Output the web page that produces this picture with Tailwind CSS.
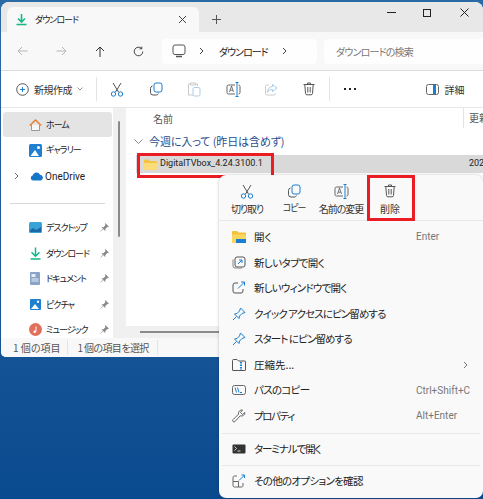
<!DOCTYPE html>
<html lang="ja">
<head>
<meta charset="utf-8">
<title>ダウンロード</title>
<script src="https://cdn.jsdelivr.net/npm/@tailwindcss/browser@4"></script>
</head>
<body class="w-[483px] h-[499px] overflow-hidden relative bg-gradient-to-b from-[#2a6aa5] to-[#0a4a8e] font-['Noto_Sans_CJK_JP','Liberation_Sans',sans-serif] [font-feature-settings:'palt'] text-[10px] text-[#222] whitespace-nowrap">

<!-- explorer window -->
<div class="absolute left-[1px] top-[2px] w-[482px] h-[355px] bg-white rounded-t-[8px] rounded-bl-[5px] overflow-hidden flex flex-col">
  <!-- tabs -->
  <div class="h-[30px] bg-[#e8e8e8] flex items-end pl-[6px] shrink-0">
    <div class="w-[192px] h-[25px] bg-[#f8f8f8] rounded-t-[6px] flex items-center pl-[9px] pr-[12px]">
      <svg width="11" height="13" viewBox="0 0 11 13"><path d="M5.5 1v7.5M2 5.5l3.5 3.5L9 5.5" fill="none" stroke="#12b886" stroke-width="1.6"/><path d="M.5 11.5h10" stroke="#12b886" stroke-width="1.6"/></svg>
      <span class="ml-[8px] text-[9px] tracking-[-1px]">ダウンロード</span>
      <svg class="ml-auto" width="9" height="9" viewBox="0 0 9 9"><path d="M1 1l7 7M8 1l-7 7" stroke="#444" stroke-width="1"/></svg>
    </div>
    <svg class="ml-[13px] mb-[8px]" width="9" height="9" viewBox="0 0 9 9"><path d="M4.5 0v9M0 4.5h9" stroke="#555" stroke-width="1"/></svg>
    <div class="ml-auto self-start flex items-center mt-[6px] mr-[14px]">
      <div class="w-[9px] h-px bg-[#222]"></div>
      <div class="ml-[27px] w-[8px] h-[8px] border border-[#222]"></div>
      <svg class="ml-[29px]" width="9" height="9" viewBox="0 0 9 9"><path d="M.5.5l8 8M8.500.5l-8 8" stroke="#222" stroke-width="1"/></svg>
    </div>
  </div>
  <!-- address row -->
  <div class="h-[39px] bg-[#f8f8f8] border-b border-[#dcdcdc] flex items-center shrink-0 relative">
    <div class="flex items-center w-[161px] pl-[16px] gap-[28px]">
      <svg width="11" height="10" viewBox="0 0 11 10"><path d="M10.5 5H1M5 1L1 5l4 4" fill="none" stroke="#b5b5b5"/></svg>
      <svg width="11" height="10" viewBox="0 0 11 10"><path d="M.5 5H10M6 1l4 4-4 4" fill="none" stroke="#b5b5b5"/></svg>
      <svg width="10" height="11" viewBox="0 0 10 11"><path d="M5 11V1M1 5l4-4 4 4" fill="none" stroke="#333"/></svg>
      <svg width="11" height="11" viewBox="0 0 11 11"><path d="M9.800 5.500a4.300 4.300 0 1 1-1.300-3.100M8.800.6v2.200H6.600" fill="none" stroke="#444"/></svg>
    </div>
    <div class="w-[155px] h-[25px] bg-white/80 rounded-[4px] flex items-center pl-[10px]">
      <svg width="14" height="14" viewBox="0 0 14 14"><rect x="1" y="1" width="12" height="9.500" rx="2" fill="none" stroke="#555"/><path d="M4 12.500h6" stroke="#555" stroke-width="1.400"/></svg>
      <svg class="ml-[13px]" width="5" height="8" viewBox="0 0 5 8"><path d="M1 1l3 3-3 3" fill="none" stroke="#444"/></svg>
      <span class="ml-[15px] w-[48px] tracking-[-1px]">ダウンロード</span>
      <svg class="ml-[15px]" width="5" height="8" viewBox="0 0 5 8"><path d="M1 1l3 3-3 3" fill="none" stroke="#444"/></svg>
    </div>
    <div class="ml-[7px] flex-1 h-[25px] bg-white/80 rounded-l-[4px] flex items-center pl-[12px] text-[#777] tracking-[-.8px]">ダウンロードの検索</div>
  </div>
  <!-- command bar -->
  <div class="h-[37px] bg-white border-b border-[#e6e6e6] flex items-center shrink-0 pl-[15px]">
    <svg width="13" height="13" viewBox="0 0 13 13"><circle cx="6.500" cy="6.500" r="5.800" fill="none" stroke="#555"/><path d="M6.500 4v5M4 6.500h5" stroke="#1a7fd0"/></svg>
    <span class="ml-[5px] w-[38px] text-[#333] tracking-[-.5px]">新規作成</span>
    <svg class="ml-[5px]" width="6" height="4" viewBox="0 0 6 4"><path d="M.5.5L3 3 5.500.5" fill="none" stroke="#999"/></svg>
    <div class="w-px h-[24px] bg-[#e4e4e4] ml-[13px]"></div>
    <div class="ml-[13px] flex items-center gap-[24.500px]">
      <svg width="14" height="15" viewBox="0 0 14 15"><path d="M3 1l5.500 9M11 1L5.500 10" fill="none" stroke="#555"/><circle cx="3.500" cy="12" r="2.200" fill="none" stroke="#1a7fd0"/><circle cx="10.500" cy="12" r="2.200" fill="none" stroke="#1a7fd0"/></svg>
      <svg width="14" height="14" viewBox="0 0 14 14"><rect x="5" y="1" width="8" height="9" rx="2" fill="none" stroke="#1a7fd0"/><path d="M3.500 4A2.500 2.500 0 0 0 1.500 6.500v4a2.500 2.500 0 0 0 2.500 2.500h3.500a2.500 2.500 0 0 0 2-1.500" fill="none" stroke="#555"/></svg>
      <svg width="14" height="15" viewBox="0 0 14 15"><path d="M3 2H1.500v11H6M9 2h1.500v2M3.500 1h5v2h-5z" fill="none" stroke="#c8c8c8"/><rect x="6" y="5.500" width="7" height="8.500" rx="1.500" fill="none" stroke="#a8cbe8"/></svg>
      <svg width="15" height="15" viewBox="0 0 15 15"><path d="M9 3H2.500A1.500 1.500 0 0 0 1 4.500v6A1.500 1.500 0 0 0 2.500 12H9M12.500 3a1.500 1.500 0 0 1 1.500 1.500v6a1.500 1.500 0 0 1-1.500 1.500" fill="none" stroke="#666"/><path d="M11 .5v14M9.500.5h3M9.500 14.500h3" fill="none" stroke="#1a7fd0"/><path d="M3.500 10l2-6 2 6M4.200 8.200h2.600" fill="none" stroke="#555" stroke-width=".8"/></svg>
      <svg width="13" height="13" viewBox="0 0 13 13"><path d="M7.500 1.500L12 5 7.500 8.500V6.500C5 6.500 3.500 7.500 2.500 9.500 2.500 6 4.500 3.700 7.500 3.500z" fill="none" stroke="#a8cbe8"/><path d="M3.500 2H2A1.500 1.500 0 0 0 .5 3.500v7A1.500 1.500 0 0 0 2 12h7a1.500 1.500 0 0 0 1.500-1.500" fill="none" stroke="#ccc"/></svg>
      <svg width="12" height="14" viewBox="0 0 12 14"><path d="M.5 2.500h11M4.500 2.500V1h3v1.500M1.800 2.500l.7 9a1.500 1.500 0 0 0 1.500 1.300h4a1.500 1.500 0 0 0 1.500-1.300l.7-9M4.800 5v5.500M7.200 5v5.500" fill="none" stroke="#555"/></svg>
    </div>
    <div class="w-px h-[24px] bg-[#e4e4e4] ml-[14px]"></div>
    <div class="ml-[14px] flex gap-[3px]"><i class="w-[2px] h-[2px] bg-[#222]"></i><i class="w-[2px] h-[2px] bg-[#222]"></i><i class="w-[2px] h-[2px] bg-[#222]"></i></div>
    <svg class="ml-[70px]" width="13" height="11" viewBox="0 0 13 11"><rect x=".5" y=".5" width="12" height="10" rx="2" fill="none" stroke="#666"/><path d="M8.500 1v9" stroke="#1a7fd0" stroke-width="3"/></svg>
    <span class="ml-[6px] text-[#333]">詳細</span>
  </div>
  <!-- body -->
  <div class="flex-1 flex min-h-0">
    <!-- nav pane -->
    <div class="w-[112px] shrink-0 pt-[4px] pl-[2px] pr-[1px] overflow-hidden flex flex-col text-[9px] tracking-[-1px]">
      <div class="h-[25px] rounded-[3px] bg-[#e4e4e4] flex items-center pl-[26px] gap-[4px] shrink-0">
        <svg width="13" height="12" viewBox="0 0 13 12"><path d="M2.500 6v5.500h8V6" fill="#f6f6f6" stroke="#999"/><path d="M.8 6.500L6.500 1l5.700 5.500" fill="none" stroke="#e8803a" stroke-width="1.500"/></svg>
        <span>ホーム</span>
      </div>
      <div class="h-[26px] flex items-center pl-[26px] gap-[4px] shrink-0">
        <svg width="13" height="13" viewBox="0 0 13 13"><rect width="13" height="13" rx="1.500" fill="#1f7fd1"/><path d="M1.500 12L6 6l4 6z" fill="#fff"/><circle cx="9.500" cy="3.500" r="1.500" fill="#fff"/></svg>
        <span>ギャラリー</span>
      </div>
      <div class="h-[26px] flex items-center pl-[11px] shrink-0">
        <svg width="5" height="8" viewBox="0 0 5 8"><path d="M1 1l3 3-3 3" fill="none" stroke="#666"/></svg>
        <svg class="ml-[11px]" width="14" height="10" viewBox="0 0 14 10"><path d="M3 9.500A2.500 2.500 0 0 1 2.600 4.600 4 4 0 0 1 10 3.700a3 3 0 0 1 1 5.800z" fill="#1476c9"/></svg>
        <span class="ml-[1px] font-['Roboto'] text-[10px] tracking-normal">OneDrive</span>
      </div>
      <div class="h-px bg-[#d8d8d8] mx-[7px] mt-[14px] mb-[11px] shrink-0"></div>
      <div class="h-[25.500px] flex items-center pl-[26px] gap-[4px] shrink-0">
        <svg width="13" height="11" viewBox="0 0 13 11"><rect width="13" height="11" rx="1.500" fill="#38a3d6"/><path d="M1 8l3-2 3 2 5-3v5H1z" fill="#1a6aa8"/></svg>
        <span>デスクトップ</span>
        <svg class="ml-auto mr-[3px]" width="9" height="9" viewBox="0 0 9 9"><path d="M5.500.5l3 3-1.500.5-2 2 0 1.500L2 4.500h1.500l2-2zM3.200 5.800L.5 8.500" fill="#888" stroke="#888" stroke-width=".6"/></svg>
      </div>
      <div class="h-[25.500px] flex items-center pl-[27px] gap-[5px] shrink-0">
        <svg width="11" height="13" viewBox="0 0 11 13"><path d="M5.500 .5v8.500M1.500 5.200L5.500 9.200l4-4M.5 12h10" fill="none" stroke="#12b886" stroke-width="1.500"/></svg>
        <span>ダウンロード</span>
        <svg class="ml-auto mr-[3px]" width="9" height="9" viewBox="0 0 9 9"><path d="M5.500.5l3 3-1.500.5-2 2 0 1.500L2 4.500h1.500l2-2zM3.200 5.800L.5 8.500" fill="#888" stroke="#888" stroke-width=".6"/></svg>
      </div>
      <div class="h-[25.500px] flex items-center pl-[27px] gap-[6px] shrink-0">
        <svg width="10" height="13" viewBox="0 0 10 13"><rect width="10" height="13" rx="1" fill="#8aa4c8"/><rect x="1.500" y="2" width="4" height="3" fill="#e4ecf5"/><path d="M1.500 7h7M1.500 9h7" stroke="#e4ecf5"/></svg>
        <span>ドキュメント</span>
        <svg class="ml-auto mr-[3px]" width="9" height="9" viewBox="0 0 9 9"><path d="M5.500.5l3 3-1.500.5-2 2 0 1.500L2 4.500h1.500l2-2zM3.200 5.800L.5 8.500" fill="#888" stroke="#888" stroke-width=".6"/></svg>
      </div>
      <div class="h-[25.500px] flex items-center pl-[27px] gap-[5px] shrink-0">
        <svg width="11" height="11" viewBox="0 0 11 11"><rect width="11" height="11" rx="1" fill="#1f7fd1"/><path d="M1 10l4-5 4 5z" fill="#fff"/><circle cx="8" cy="2.800" r="1.200" fill="#fff"/></svg>
        <span>ピクチャ</span>
        <svg class="ml-auto mr-[3px]" width="9" height="9" viewBox="0 0 9 9"><path d="M5.500.5l3 3-1.500.5-2 2 0 1.500L2 4.500h1.500l2-2zM3.200 5.800L.5 8.500" fill="#888" stroke="#888" stroke-width=".6"/></svg>
      </div>
      <div class="h-[25.500px] flex items-center pl-[26px] gap-[4px] shrink-0">
        <svg width="13" height="13" viewBox="0 0 13 13"><circle cx="6.500" cy="6.500" r="6.500" fill="#e0705a"/><path d="M7 3.500v5" stroke="#fff"/><circle cx="5.700" cy="8.700" r="1.300" fill="#fff"/></svg>
        <span>ミュージック</span>
        <svg class="ml-auto mr-[3px]" width="9" height="9" viewBox="0 0 9 9"><path d="M5.500.5l3 3-1.500.5-2 2 0 1.500L2 4.500h1.500l2-2zM3.200 5.800L.5 8.500" fill="#888" stroke="#888" stroke-width=".6"/></svg>
      </div>
    </div>
    <!-- nav scrollbar -->
    <div class="w-[12px] bg-[#f0f0f0] shrink-0 flex justify-center pt-[13px]"><div class="w-[2px] h-[116px] bg-[#8a8a8a] rounded-full"></div></div>
    <!-- file list -->
    <div class="flex-1 min-w-0 relative pl-[1px] border-l border-[#f2f2f2]">
      <div class="h-[20px] flex items-center pl-[26px] text-[#555] relative">名前
        <span class="absolute left-[336px] top-0 h-[20px] border-l border-[#e4e4e4] pl-[5px] leading-[20px]">更新</span>
      </div>
      <div class="h-[27px] flex items-center pl-[7px] text-[#2a4e8f] text-[11px]">
        <svg width="9" height="6" viewBox="0 0 9 6"><path d="M.5.5l4 4 4-4" fill="none" stroke="#888"/></svg>
        <span class="ml-[6px] tracking-[-.1px]">今週に入って (昨日は含めず)</span>
      </div>
      <div class="h-[18px] ml-[9px] bg-[#d9d9d9] flex items-center pl-[8px] font-['Roboto'] text-[9px]">
        <svg width="13" height="11" viewBox="0 0 13 11"><path d="M0 1.500A1 1 0 0 1 1 .5h3.500L6 2h6a1 1 0 0 1 1 1v7a1 1 0 0 1-1 1H1a1 1 0 0 1-1-1z" fill="#f4c542"/><path d="M0 4h13v6a1 1 0 0 1-1 1H1a1 1 0 0 1-1-1z" fill="#fbdc7a"/></svg>
        <span class="ml-[3px]">DigitalTVbox_4.24.3100.1</span>
        <span class="absolute left-[343px]">202</span>
      </div>
      <!-- horizontal scrollbar -->
      <div class="absolute bottom-0 left-0 right-0 h-[12px] bg-[#f0f0f0] pl-[14px] pt-[5px]"><div class="h-[2px] w-[100px] bg-[#8a8a8a]"></div></div>
    </div>
  </div>
  <!-- status bar -->
  <div class="h-[19px] bg-[#f8f8f8] shrink-0 flex items-center pl-[12px] text-[#555]">
    <span>1 個の項目</span>
    <span class="ml-[7px] border-l border-[#e4e4e4] pl-[9px] pr-[8px] border-r tracking-[-.6px]">1 個の項目を選択</span>
  </div>
</div>

<!-- red highlight on the file row -->
<div class="absolute left-[137px] top-[153px] w-[137px] h-[25px] border-[3px] border-[#ec1c24]"></div>

<!-- context menu -->
<div class="absolute left-[219px] top-[175px] w-[264px] h-[323px] bg-[#f9f9f9] rounded-[7px] shadow-[0_0_3px_rgba(0,0,0,.25)] text-[#222]">
  <div class="h-[46px] border-b border-[#e8e8e8] flex items-start pt-[9px]">
    <div class="w-[56px] flex flex-col items-center gap-[2px] text-[#333]">
      <svg width="14" height="15" viewBox="0 0 14 15"><path d="M3 1l5.500 9M11 1L5.500 10" fill="none" stroke="#555"/><circle cx="3.500" cy="12" r="2.200" fill="none" stroke="#1a7fd0"/><circle cx="10.500" cy="12" r="2.200" fill="none" stroke="#1a7fd0"/></svg>
      <span class="tracking-[-1.200px]">切り取り</span>
    </div>
    <div class="w-[38px] flex flex-col items-center gap-[2px] text-[#333]">
      <svg width="14" height="14" viewBox="0 0 14 14"><rect x="5" y="1" width="8" height="9" rx="2" fill="none" stroke="#1a7fd0"/><path d="M3.500 4A2.500 2.500 0 0 0 1.500 6.500v4a2.500 2.500 0 0 0 2.500 2.500h3.500a2.500 2.500 0 0 0 2-1.500" fill="none" stroke="#555"/></svg>
      <span class="mt-[1px] text-[9px] tracking-[-1px]">コピー</span>
    </div>
    <div class="w-[56px] flex flex-col items-center gap-[2px] text-[#333]">
      <svg width="15" height="15" viewBox="0 0 15 15"><path d="M9 3H2.500A1.500 1.500 0 0 0 1 4.500v6A1.500 1.500 0 0 0 2.500 12H9M12.500 3a1.500 1.500 0 0 1 1.500 1.500v6a1.500 1.500 0 0 1-1.500 1.500" fill="none" stroke="#666"/><path d="M11 .5v14M9.500.5h3M9.500 14.500h3" fill="none" stroke="#1a7fd0"/><path d="M3.500 10l2-6 2 6M4.200 8.200h2.600" fill="none" stroke="#555" stroke-width=".8"/></svg>
      <span class="tracking-[-1px]">名前の変更</span>
    </div>
    <div class="w-[42px] flex flex-col items-center gap-[2px] text-[#333]">
      <svg width="12" height="14" viewBox="0 0 12 14"><path d="M.5 2.500h11M4.500 2.500V1h3v1.500M1.800 2.500l.7 9a1.500 1.500 0 0 0 1.500 1.300h4a1.500 1.500 0 0 0 1.500-1.300l.7-9M4.800 5v5.500M7.200 5v5.500" fill="none" stroke="#555"/></svg>
      <span class="mt-[1px]">削除</span>
    </div>
  </div>
  <div class="pt-[3px] text-[10.500px]">
    <div class="h-[25.600px] flex items-center pl-[13px] pr-[14px]">
      <svg class="w-[14px]" width="14" height="12" viewBox="0 0 14 12"><path d="M0 1a1 1 0 0 1 1-1h4l1.500 1.500H13a1 1 0 0 1 1 1V11a1 1 0 0 1-1 1H1a1 1 0 0 1-1-1z" fill="#f5c23e"/><rect x="0" y="3.500" width="14" height="8.500" rx="1" fill="#fbd65e"/><rect x="4" y="8" width="10" height="4" fill="#1a7fd0"/></svg>
      <span class="ml-[8px]">開く</span><span class="ml-auto w-[53px] text-[#777] font-['Roboto'] text-[10px]">Enter</span>
    </div>
    <div class="h-[25.600px] flex items-center pl-[13px]">
      <svg class="w-[14px]" width="14" height="13" viewBox="0 0 14 13"><rect x="3" y="1" width="10" height="10" rx="2" fill="none" stroke="#555"/><path d="M1 3.500V10a2 2 0 0 0 2 2h7" fill="none" stroke="#888"/><path d="M6 8l4-4M7 4h3v3" fill="none" stroke="#1a7fd0"/></svg>
      <span class="ml-[8px] tracking-[-.6px]">新しいタブで開く</span>
    </div>
    <div class="h-[25.600px] flex items-center pl-[13px]">
      <svg class="w-[14px]" width="14" height="13" viewBox="0 0 14 13"><path d="M6 2H3a2 2 0 0 0-2 2v6a2 2 0 0 0 2 2h6a2 2 0 0 0 2-2V8" fill="none" stroke="#555"/><path d="M6 7.500L12.500 1M9 1h3.500v3.500" fill="none" stroke="#1a7fd0"/></svg>
      <span class="ml-[8px] tracking-[-.8px]">新しいウィンドウで開く</span>
    </div>
    <div class="h-[25.600px] flex items-center pl-[13px]">
      <svg class="w-[14px]" width="14" height="14" viewBox="0 0 14 14"><path d="M8.500 1L13 5.500l-3 1-2.500 2.500-.5 2.500L2.500 7 5 6.500 7.500 4zM4.500 9.500L1 13" fill="none" stroke="#1a7fd0"/></svg>
      <span class="ml-[8px] tracking-[-.9px]">クイック アクセスにピン留めする</span>
    </div>
    <div class="h-[25.600px] flex items-center pl-[13px]">
      <svg class="w-[14px]" width="14" height="14" viewBox="0 0 14 14"><path d="M8.500 1L13 5.500l-3 1-2.500 2.500-.5 2.500L2.500 7 5 6.500 7.500 4zM4.500 9.500L1 13" fill="none" stroke="#1a7fd0"/></svg>
      <span class="ml-[8px] tracking-[-.9px]">スタート にピン留めする</span>
    </div>
    <div class="h-[25.600px] flex items-center pl-[13px] pr-[15px]">
      <svg class="w-[14px]" width="14" height="12" viewBox="0 0 14 12"><path d="M1 11.500a.5.5 0 0 1-.5-.5V1.500a1 1 0 0 1 1-1h3.500l1.500 1.500H13a.5.5 0 0 1 .5.5V11a.5.5 0 0 1-.5.5z" fill="none" stroke="#555"/><path d="M9 3v8" stroke="#1a7fd0" stroke-width="2" stroke-dasharray="1.500 1"/></svg>
      <span class="ml-[8px]">圧縮先...</span>
      <svg class="ml-auto" width="5" height="8" viewBox="0 0 5 8"><path d="M1 1l3 3-3 3" fill="none" stroke="#777"/></svg>
    </div>
    <div class="h-[25.600px] flex items-center pl-[13px] pr-[14px]">
      <svg class="w-[14px]" width="14" height="10" viewBox="0 0 14 10"><rect x=".5" y=".5" width="13" height="9" rx="2" fill="none" stroke="#666"/><path d="M3 2.500L4.500 7.500M5.500 2.500L7 7.500" stroke="#1a7fd0"/><path d="M8 7.500h2" stroke="#1a7fd0"/></svg>
      <span class="ml-[8px] tracking-[-.7px]">パスのコピー</span>
      <span class="ml-auto w-[53px] text-[#777] font-['Roboto'] text-[10px]">Ctrl+Shift+C</span>
    </div>
    <div class="h-[25.600px] flex items-center pl-[13px] pr-[14px]">
      <svg class="w-[14px]" width="14" height="14" viewBox="0 0 14 14"><path d="M13 3.500a3.500 3.500 0 0 1-4.800 3.300L3 12.500a1.300 1.300 0 0 1-2-1.800l5.500-5.500A3.500 3.500 0 0 1 10.500 1L8.500 3.500 10.500 5.500z" fill="none" stroke="#666"/></svg>
      <span class="ml-[8px] tracking-[-1.400px]">プロパティ</span>
      <span class="ml-auto w-[53px] text-[#777] font-['Roboto'] text-[10px]">Alt+Enter</span>
    </div>
    <div class="h-px bg-[#e8e8e8] mx-[3px] mt-[4px]"></div>
    <div class="h-[31px] flex items-center pl-[13px]">
      <svg class="w-[14px]" width="14" height="10" viewBox="0 0 14 10"><rect width="13" height="9" y=".5" x=".5" rx="1" fill="#333"/><path d="M2.500 2.500l2 2-2 2M5.500 7h3" fill="none" stroke="#fff" stroke-width=".8"/></svg>
      <span class="ml-[8px] tracking-[-1.100px]">ターミナルで開く</span>
    </div>
    <div class="h-px bg-[#e8e8e8] mx-[3px]"></div>
    <div class="h-[31px] flex items-center pl-[13px]">
      <svg class="w-[14px]" width="14" height="14" viewBox="0 0 14 14"><path d="M5 2H2.500A1.500 1.500 0 0 0 1 3.500v8A1.500 1.500 0 0 0 2.500 13h7a1.500 1.500 0 0 0 1.500-1.500V9M1 7.500h5.500V13" fill="none" stroke="#666"/><path d="M7 6.500L12.500 1M9.500 1h3v3" fill="none" stroke="#1a7fd0"/></svg>
      <span class="ml-[8px] tracking-[-.7px]">その他のオプションを確認</span>
    </div>
  </div>
</div>

<!-- red highlight on the delete command -->
<div class="absolute left-[367px] top-[175px] w-[48px] h-[46px] border-[3px] border-[#ec1c24]"></div>
</body>
</html>
